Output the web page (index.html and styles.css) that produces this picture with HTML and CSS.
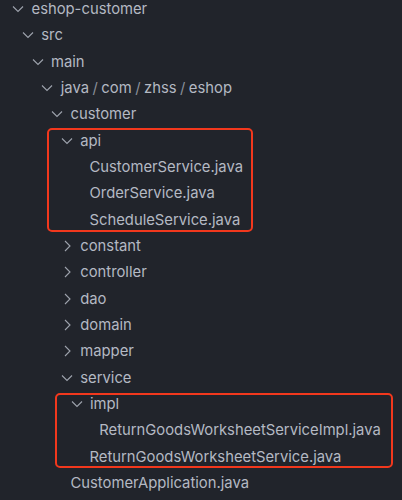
FILE: index.html
```html
<!DOCTYPE html>
<html>
<head>
<meta charset="utf-8">
<link rel="stylesheet" href="styles.css">
</head>
<body>
<div class="tree">
  <div class="row lv0"><svg class="chev" viewBox="0 0 12 12"><path d="M1 3.5 L6 8.5 L11 3.5"/></svg><span>eshop-customer</span></div>
  <div class="row lv1"><svg class="chev" viewBox="0 0 12 12"><path d="M1 3.5 L6 8.5 L11 3.5"/></svg><span>src</span></div>
  <div class="row lv2"><svg class="chev" viewBox="0 0 12 12"><path d="M1 3.5 L6 8.5 L11 3.5"/></svg><span>main</span></div>
  <div class="row lv3"><svg class="chev" viewBox="0 0 12 12"><path d="M1 3.5 L6 8.5 L11 3.5"/></svg><span>java<i class="sep">/</i>com<i class="sep">/</i>zhss<i class="sep">/</i>eshop</span></div>
  <div class="row lv4"><svg class="chev" viewBox="0 0 12 12"><path d="M1 3.5 L6 8.5 L11 3.5"/></svg><span>customer</span></div>
  <div class="group hl-api">
    <div class="row lv5"><svg class="chev" viewBox="0 0 12 12"><path d="M1 3.5 L6 8.5 L11 3.5"/></svg><span>api</span></div>
    <div class="row file f6"><span>CustomerService.java</span></div>
    <div class="row file f6"><span>OrderService.java</span></div>
    <div class="row file f6"><span>ScheduleService.java</span></div>
  </div>
  <div class="row lv5"><svg class="chev" viewBox="0 0 12 12"><path d="M4 1 L9 6 L4 11"/></svg><span>constant</span></div>
  <div class="row lv5"><svg class="chev" viewBox="0 0 12 12"><path d="M4 1 L9 6 L4 11"/></svg><span>controller</span></div>
  <div class="row lv5"><svg class="chev" viewBox="0 0 12 12"><path d="M4 1 L9 6 L4 11"/></svg><span>dao</span></div>
  <div class="row lv5"><svg class="chev" viewBox="0 0 12 12"><path d="M4 1 L9 6 L4 11"/></svg><span>domain</span></div>
  <div class="row lv5"><svg class="chev" viewBox="0 0 12 12"><path d="M4 1 L9 6 L4 11"/></svg><span>mapper</span></div>
  <div class="row lv5"><svg class="chev" viewBox="0 0 12 12"><path d="M1 3.5 L6 8.5 L11 3.5"/></svg><span>service</span></div>
  <div class="group hl-impl">
    <div class="row lv6"><svg class="chev" viewBox="0 0 12 12"><path d="M1 3.5 L6 8.5 L11 3.5"/></svg><span>impl</span></div>
    <div class="row file f7"><span>ReturnGoodsWorksheetServiceImpl.java</span></div>
    <div class="row file f6"><span>ReturnGoodsWorksheetService.java</span></div>
  </div>
  <div class="row file f4"><span>CustomerApplication.java</span></div>
</div>
</body>
</html>
```
FILE: styles.css
```css
html, body {
  margin: 0;
  padding: 0;
  background: #21242b;
  height: 100%;
  overflow: hidden;
}
.tree {
  margin-top: -4.2px;
  font-family: Inter, "Noto Sans", sans-serif;
  font-size: 14.8px;
  color: #b4b9c3;
}
.row {
  height: 26.33px;
  display: flex;
  align-items: center;
  white-space: nowrap;
}
.chev {
  width: 12px;
  height: 12px;
  flex: none;
  margin-right: 7.5px;
  fill: none;
  stroke: #9ea3ad;
  stroke-width: 1.1;
}
.lv0 { padding-left: 12px; }
.lv1 { padding-left: 21.75px; }
.lv2 { padding-left: 31.5px; }
.lv3 { padding-left: 41.25px; }
.lv4 { padding-left: 51px; }
.lv5 { padding-left: 60.75px; }
.lv6 { padding-left: 70.5px; }
.f4 { padding-left: 70.5px; }
.f6 { padding-left: 89.5px; }
.f7 { padding-left: 99.25px; }
.sep {
  font-style: normal;
  color: #8a8f99;
  margin: 0 3.5px;
}
.group {
  position: relative;
}
.group::after {
  content: "";
  position: absolute;
  border: 2px solid #f2381d;
  border-radius: 5px;
  box-sizing: border-box;
  pointer-events: none;
}
.hl-api::after {
  left: 47px;
  width: 206px;
  top: 1px;
  bottom: 1px;
}
.hl-impl::after {
  left: 55px;
  width: 338px;
  top: 2px;
  bottom: 2px;
}
```
